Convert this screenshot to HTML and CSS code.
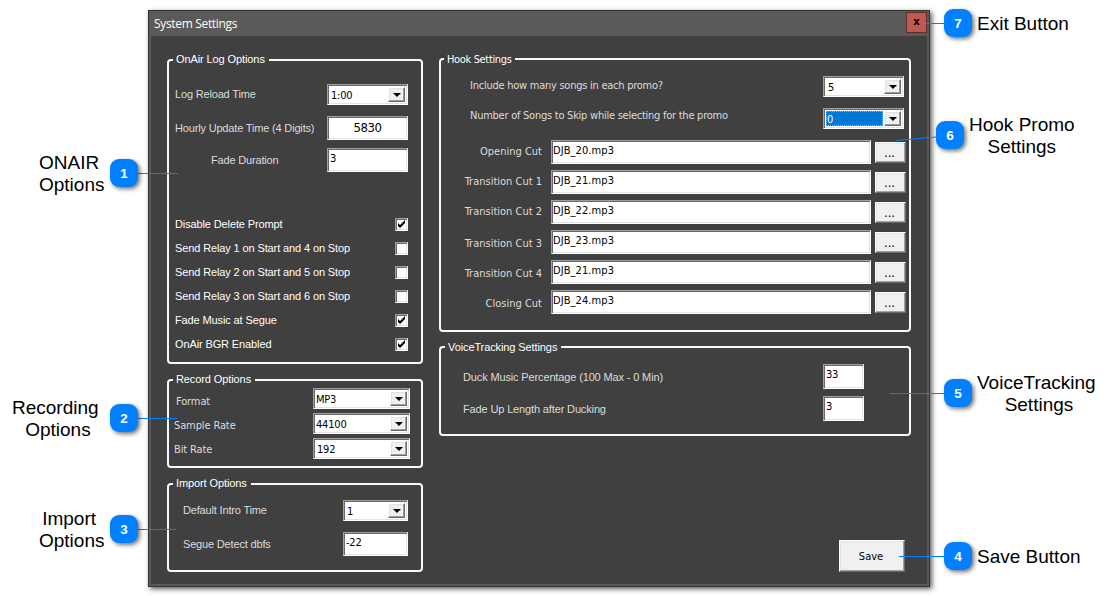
FILE: index.html
```html
<!DOCTYPE html>
<html lang="en">
<head>
<meta charset="utf-8">
<title>System Settings</title>
<link rel="stylesheet" href="styles.css">
</head>
<body>
<main class="window">
  <header class="titlebar"><h1>System Settings</h1><button class="exit">x</button></header>
  <div class="client">
    <div class="left">
      <section class="group onair">
        <h2>OnAir Log Options</h2>
        <div class="row reload"><label>Log Reload Time</label><div class="combo w81"><span>1:00</span><i></i></div></div>
        <div class="row hourly"><label>Hourly Update Time (4 Digits)</label><div class="field w81 big">5830</div></div>
        <div class="row fade"><label>Fade Duration</label><div class="field w81">3</div></div>
        <div class="checks">
          <div class="row"><label>Disable Delete Prompt</label><b class="check"><svg viewBox="0 0 9 9"><path d="M1 3v3l2 2 5-5V0L3 5z"/></svg></b></div>
          <div class="row"><label>Send Relay 1 on Start and 4 on Stop</label><b class="check"></b></div>
          <div class="row"><label>Send Relay 2 on Start and 5 on Stop</label><b class="check"></b></div>
          <div class="row"><label>Send Relay 3 on Start and 6 on Stop</label><b class="check"></b></div>
          <div class="row"><label>Fade Music at Segue</label><b class="check"><svg viewBox="0 0 9 9"><path d="M1 3v3l2 2 5-5V0L3 5z"/></svg></b></div>
          <div class="row"><label>OnAir BGR Enabled</label><b class="check"><svg viewBox="0 0 9 9"><path d="M1 3v3l2 2 5-5V0L3 5z"/></svg></b></div>
        </div>
      </section>
      <section class="group record">
        <h2>Record Options</h2>
        <div class="cols">
          <div class="labels tahoma"><label class="indent">Format</label><label>Sample Rate</label><label>Bit Rate</label></div>
          <div class="fields">
            <div class="combo w97"><span class="tight">MP3</span><i></i></div>
            <div class="combo w97"><span class="tight">44100</span><i></i></div>
            <div class="combo w97"><span>192</span><i></i></div>
          </div>
        </div>
      </section>
      <section class="group import">
        <h2>Import Options</h2>
        <div class="row intro"><label>Default Intro Time</label><div class="combo w65"><span>1</span><i></i></div></div>
        <div class="row segue"><label>Segue Detect dbfs</label><div class="field w65">-22</div></div>
      </section>
    </div>
    <div class="right">
      <section class="group hook">
        <h2 class="tahoma">Hook Settings</h2>
        <div class="cols counts">
          <div class="labels tahoma"><label>Include how many songs in each promo?</label><label>Number of Songs to Skip while selecting for the promo</label></div>
          <div class="fields">
            <div class="combo w81"><span>5</span><i></i></div>
            <div class="combo w81"><span class="selected">0</span><i></i></div>
          </div>
        </div>
        <div class="cols cuts">
          <div class="labels tahoma">
            <label>Opening Cut</label><label>Transition Cut 1</label><label>Transition Cut 2</label><label class="low">Transition Cut 3</label><label>Transition Cut 4</label><label>Closing Cut</label>
          </div>
          <div class="fields">
            <div class="field">DJB_20.mp3</div><div class="field">DJB_21.mp3</div><div class="field">DJB_22.mp3</div><div class="field">DJB_23.mp3</div><div class="field">DJB_21.mp3</div><div class="field">DJB_24.mp3</div>
          </div>
          <div class="browse">
            <button>...</button><button>...</button><button>...</button><button>...</button><button>...</button><button>...</button>
          </div>
        </div>
      </section>
      <section class="group voice">
        <h2>VoiceTracking Settings</h2>
        <div class="row"><label class="duck">Duck Music Percentage (100 Max - 0 Min)</label><div class="field w41">33</div></div>
        <div class="row"><label class="fadeup">Fade Up Length after Ducking</label><div class="field w41">3</div></div>
      </section>
      <button class="save">Save</button>
    </div>
  </div>
</main>
<svg class="leaders" viewBox="0 0 1117 596">
  <path d="M138 173.5H178M138 418.5H177M138 529.5H176M926 23.5H944M896 140.5L936 137M890 393.5H944M899 556.5H944"/>
</svg>
<aside class="badge n1">1</aside><p class="note t1">ONAIR<br>Options</p>
<aside class="badge n2">2</aside><p class="note t2">Recording&nbsp;<br>Options</p>
<aside class="badge n3">3</aside><p class="note t3">Import&nbsp;<br>Options</p>
<aside class="badge n4">4</aside><p class="note t4">Save Button</p>
<aside class="badge n5">5</aside><p class="note t5">VoiceTracking&nbsp;<br>Settings</p>
<aside class="badge n6">6</aside><p class="note t6">Hook Promo<br>Settings</p>
<aside class="badge n7">7</aside><p class="note t7">Exit Button</p>
</body>
</html>
```
FILE: styles.css
```css
* { box-sizing: border-box; }
body {
  margin: 0; padding: 10px 0 0 148px; height: 596px; overflow: hidden;
  position: relative; background: #fff; font: 11px/14px "Liberation Sans", Arial, sans-serif;
}
h1, h2, p { margin: 0; font-weight: normal; }
label { color: #dcdcdc; white-space: nowrap; display: block; height: 14px; letter-spacing: -0.17px; }
.tahoma, .tahoma label, .combo, .field, .save { font-family: "DejaVu Sans Condensed", "DejaVu Sans", sans-serif; font-stretch: condensed; letter-spacing: -0.2px; }

/* window frame */
.window {
  width: 782px; height: 577px; border: 1px solid #333;
  background: #5b5a58; box-shadow: 2px 2px 5px rgba(0,0,0,.65); padding: 0 2px 2px;
}
.titlebar { height: 25px; display: flex; justify-content: space-between; padding: 1px 0 0 3px; }
.titlebar h1 { font: 12px/23px "Open Sans", sans-serif; color: #fff; letter-spacing: -0.33px; }
.exit {
  width: 21px; height: 21px; padding: 0 0 2px; border: 1px solid #5a302d;
  background: #c1574f; color: #000; font: bold 10px/14px "DejaVu Sans", sans-serif;
}
.client { height: 548px; background: #404040; display: flex; padding: 22px 16px 0; gap: 16px; }
.left { width: 256px; padding-top: 1px; }
.right { width: 472px; }

/* group boxes */
.group { border: 2px solid #f6f9fc; border-radius: 4px; padding: 0 13px 0 6px; }
.group h2 {
  width: max-content; height: 14px; margin: -9px 0 0 -2px; padding: 0 4px 0 3px;
  font-size: 11px; line-height: 14px; color: #fff; background: #404040; letter-spacing: -0.1px;
}
.row, .cols { display: flex; justify-content: space-between; }
.row { align-items: center; }
.labels, .fields, .browse { display: flex; flex-direction: column; }

.onair { height: 305px; }
.reload { margin-top: 18px; }
.reload label, .intro label { margin-top: -1px; }
.hourly { margin-top: 11px; }
.fade { margin-top: 8px; padding-left: 36px; }
.checks { margin-top: 41px; }
.checks .row { height: 24px; }
.checks label { color: #fff; letter-spacing: -0.12px; }
.checks { margin-top: 40px; }

.record { height: 89px; margin-top: 15px; padding: 0 11px 0 5px; }
.record h2 { margin-left: -1px; }
.record .cols { margin-top: 2px; }
.record .labels { padding-top: 7px; gap: 10px; }
.record .labels label { letter-spacing: -0.12px; }
.record .fields { gap: 4px; }
.record .combo span { padding-left: 1px; }
.record .combo .tight { padding-left: 0; }
.indent { padding-left: 2px; }

.import { height: 89px; margin-top: 15px; padding-left: 14px; }
.import h2 { margin-left: -10px; }
.intro { margin-top: 10px; }
.segue { margin-top: 11px; }

.hook { height: 274px; padding: 0 3px 0 5px; }
.hook h2 { margin: -7px 0 -1px -2px; letter-spacing: -0.35px; }
.counts { margin: 10px 2px 0 24px; }
.counts .labels { padding-top: 3px; gap: 16px; }
.counts .labels label { letter-spacing: -0.25px; }
.counts .fields { gap: 11px; }
.counts .combo span { padding-left: 2px; }
.cuts { margin-top: 11px; }
.cuts .labels { width: 96px; align-items: flex-end; padding-top: 5px; gap: 16px; }
.cuts .labels label { letter-spacing: 0; }
.cuts .low { margin-top: 2px; }
.cuts .fields { width: 320px; gap: 6px; margin-left: 5px; }
.cuts .field { letter-spacing: 0.08px; padding-left: 1px; }
.browse { padding-top: 2px; gap: 9px; }

.voice { height: 90px; margin-top: 14px; padding: 0 45px 0 22px; }
.voice h2 { margin: -8px 0 0 -18px; }
.voice .row { margin-top: 7px; }
.voice h2 + .row { margin-top: 10px; }
.voice .row label { letter-spacing: -0.14px; }
.voice .field { height: 25px; }

/* controls */
.field, .combo, .check {
  background: #fff; border: 1px solid; border-color: #a0a0a0 #fff #fff #a0a0a0;
  box-shadow: inset 1px 1px #696969, inset -1px -1px #e3e3e3;
}
.field { height: 24px; padding: 3px 2px; color: #000; line-height: 14px; }
.field.big { font-size: 13px; line-height: 16px; text-align: center; letter-spacing: -0.4px; }
.combo { height: 21px; padding: 2px; display: flex; color: #000; }
.combo span { flex: 1; margin: 0 1px 0 0; padding: 2px 0 0 1px; line-height: 14px; }
.counts .combo .selected { background: #0078d7; color: #fff; border: 1px dotted #f0a050; padding: 1px 0 0 0; line-height: 14px; }
.combo i, .browse button, .save {
  background: #f0f0f0; border: 1px solid; border-color: #fff #696969 #696969 #fff;
  box-shadow: inset -1px -1px #a0a0a0, inset 1px 1px #e3e3e3;
}
.combo i { width: 17px; display: flex; align-items: center; justify-content: center; }
.combo i::after { content: ""; border: 4px solid transparent; border-top-color: #000; border-bottom: 0; }
.w97 { width: 97px; } .w81 { width: 81px; } .w65 { width: 65px; } .w41 { width: 41px; }
.check { width: 13px; height: 13px; padding: 1px; }
.check svg { display: block; width: 9px; height: 9px; }
.browse button { width: 31px; height: 21px; padding: 0 2px 0 0; font: 13px/14px "DejaVu Sans Condensed", sans-serif; }
.save { display: block; width: 66px; height: 32px; margin: 104px 0 0 400px; padding: 0 2px 0 0; font-size: 11px; letter-spacing: 0; }

/* numbered callouts placed over the window */
.leaders { position: absolute; left: 0; top: 0; width: 1117px; height: 596px; fill: none; stroke: #0080ff; }
.badge {
  position: absolute; width: 28px; height: 28px; border-radius: 9px; background: #0080ff;
  color: #fff; text-align: center; font: bold 13.5px/29px "Liberation Sans", sans-serif;
  box-shadow: 2px 2px 4px rgba(0,0,0,.55);
}
.note { position: absolute; font-size: 19px; line-height: 22px; color: #000; text-align: center; white-space: nowrap; }
.n1 { left: 110px; top: 159px; } .t1 { left: 39px; top: 152px; text-align: left; }
.n2 { left: 110px; top: 404px; } .t2 { left: 12px; top: 397px; }
.n3 { left: 110px; top: 515px; } .t3 { left: 39px; top: 508px; }
.n4 { left: 944px; top: 542px; } .t4 { left: 977px; top: 546px; }
.n5 { left: 944px; top: 379px; } .t5 { left: 977px; top: 372px; }
.n6 { left: 936px; top: 121px; } .t6 { left: 969px; top: 114px; }
.n7 { left: 944px; top: 9px; } .t7 { left: 977px; top: 13px; }
```
